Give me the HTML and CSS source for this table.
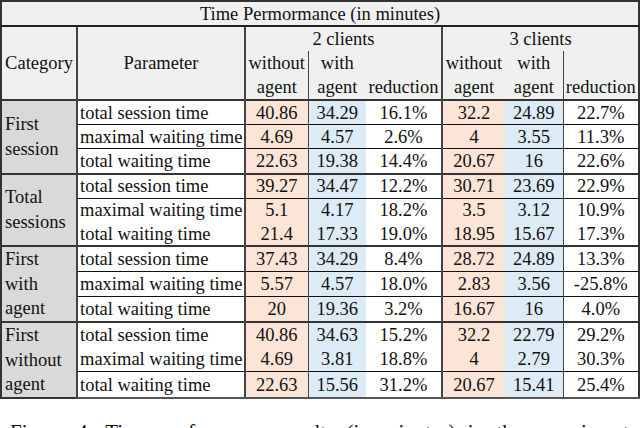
FILE: index.html
```html
<!DOCTYPE html>
<html>
<head>
<meta charset="utf-8">
<link rel="stylesheet" href="styles.css">
</head>
<body>
<table class="perf">
  <colgroup>
    <col class="c-cat"><col class="c-par">
    <col class="c-wo"><col class="c-w"><col class="c-red">
    <col class="c-wo"><col class="c-w"><col class="c-red">
  </colgroup>
  <tr class="title"><th colspan="8">Time Permormance (in minutes)</th></tr>
  <tr class="hd-a">
    <th rowspan="2" class="h-cat">Category</th>
    <th rowspan="2" class="h-par">Parameter</th>
    <th colspan="3" class="grp g1">2 clients</th>
    <th colspan="3" class="grp">3 clients</th>
  </tr>
  <tr class="hd-b">
    <th class="sub">without<br>agent</th>
    <th class="sub vl">with<br>agent</th>
    <th class="sub bot g1">reduction</th>
    <th class="sub">without<br>agent</th>
    <th class="sub">with<br>agent</th>
    <th class="sub bot vl">reduction</th>
  </tr>

  <tr class="sec">
    <td rowspan="3" class="cat">First<br>session</td>
    <td class="par">total session time</td>
    <td class="o">40.86</td><td class="b vl">34.29</td><td class="g1">16.1%</td>
    <td class="o">32.2</td><td class="b">24.89</td><td class="vl">22.7%</td>
  </tr>
  <tr class="rl">
    <td class="par">maximal waiting time</td>
    <td class="o">4.69</td><td class="b vl">4.57</td><td class="g1">2.6%</td>
    <td class="o">4</td><td class="b">3.55</td><td class="vl">11.3%</td>
  </tr>
  <tr class="rl">
    <td class="par">total waiting time</td>
    <td class="o">22.63</td><td class="b vl">19.38</td><td class="g1">14.4%</td>
    <td class="o">20.67</td><td class="b">16</td><td class="vl">22.6%</td>
  </tr>

  <tr class="sec">
    <td rowspan="3" class="cat">Total<br>sessions</td>
    <td class="par">total session time</td>
    <td class="o">39.27</td><td class="b vl">34.47</td><td class="g1">12.2%</td>
    <td class="o">30.71</td><td class="b">23.69</td><td class="vl">22.9%</td>
  </tr>
  <tr class="rl">
    <td class="par">maximal waiting time</td>
    <td class="o">5.1</td><td class="b vl">4.17</td><td class="g1">18.2%</td>
    <td class="o">3.5</td><td class="b">3.12</td><td class="vl">10.9%</td>
  </tr>
  <tr>
    <td class="par">total waiting time</td>
    <td class="o">21.4</td><td class="b vl">17.33</td><td class="g1">19.0%</td>
    <td class="o">18.95</td><td class="b">15.67</td><td class="vl">17.3%</td>
  </tr>

  <tr class="sec">
    <td rowspan="3" class="cat">First<br>with<br>agent</td>
    <td class="par">total session time</td>
    <td class="o">37.43</td><td class="b vl">34.29</td><td class="g1">8.4%</td>
    <td class="o">28.72</td><td class="b">24.89</td><td class="vl">13.3%</td>
  </tr>
  <tr class="rl">
    <td class="par">maximal waiting time</td>
    <td class="o">5.57</td><td class="b vl">4.57</td><td class="g1">18.0%</td>
    <td class="o">2.83</td><td class="b">3.56</td><td class="vl">-25.8%</td>
  </tr>
  <tr class="rl">
    <td class="par">total waiting time</td>
    <td class="o">20</td><td class="b vl">19.36</td><td class="g1">3.2%</td>
    <td class="o">16.67</td><td class="b">16</td><td class="vl">4.0%</td>
  </tr>

  <tr class="sec">
    <td rowspan="3" class="cat">First<br>without<br>agent</td>
    <td class="par">total session time</td>
    <td class="o">40.86</td><td class="b vl">34.63</td><td class="g1">15.2%</td>
    <td class="o">32.2</td><td class="b">22.79</td><td class="vl">29.2%</td>
  </tr>
  <tr>
    <td class="par">maximal waiting time</td>
    <td class="o">4.69</td><td class="b vl">3.81</td><td class="g1">18.8%</td>
    <td class="o">4</td><td class="b">2.79</td><td class="vl">30.3%</td>
  </tr>
  <tr class="rl last">
    <td class="par">total waiting time</td>
    <td class="o">22.63</td><td class="b vl">15.56</td><td class="g1">31.2%</td>
    <td class="o">20.67</td><td class="b">15.41</td><td class="vl">25.4%</td>
  </tr>
</table>
<p class="caption">Figure 4: Time performance results (in minutes) in the experiments</p>
</body>
</html>
```

FILE: styles.css
```css
html, body {
  margin: 0;
  padding: 0;
  overflow: hidden;
  background: #ffffff;
}

body {
  font-family: "Liberation Serif", "DejaVu Serif", serif;
}

.perf {
  border-collapse: collapse;
  table-layout: fixed;
  width: 639px;
  font-family: "Liberation Serif", "DejaVu Serif", serif;
  font-size: 18.5px;
  color: #111;
  border: 2px solid #333;
}

.c-cat { width: 76px; }
.c-par { width: 168px; }
.c-wo { width: 63px; }
.c-w { width: 58px; }
.c-red { width: 76px; }

.perf th,
.perf td {
  padding: 0 1px;
  font-family: "Liberation Serif", "DejaVu Serif", serif;
  font-weight: normal;
  white-space: nowrap;
  text-align: center;
  vertical-align: middle;
  line-height: 22px;
}

.perf .title th {
  height: 23px;
  background: #f0f0f0;
  border-bottom: 2px solid #222;
}

.perf .hd-a th,
.perf .hd-b th {
  background: #f0f0f0;
}

.perf .hd-a th { height: 24px; }
.perf .hd-b th { height: 46px; vertical-align: top; line-height: 24px; }
.perf .hd-b th.bot { vertical-align: bottom; }

.perf .h-cat { border-right: 2px solid #444; }
.perf .h-par { border-right: 2px solid #444; }

.perf .g1 { border-right: 2px solid #444; }

.perf .vl { border-left: 1px solid #444; }

.perf td { height: 23.2px; }

.perf .cat {
  background: #d9d9d9;
  text-align: left;
  padding-left: 3px;
  border-right: 2px solid #444;
  border-top: 2px solid #333;
  line-height: 24.6px;
}

.perf .par {
  text-align: left;
  padding-left: 2px;
  border-right: 2px solid #444;
}

.perf .o { background: #fce4d6; }
.perf .b { background: #ddebf7; }

.perf .sec td { border-top: 2px solid #333; }
.perf .rl td { border-top: 1px solid #111; }
.perf .last td { border-bottom: 2px solid #555; }

.caption {
  margin: 21px 0 0 10px;
  font-family: "Liberation Serif", "DejaVu Serif", serif;
  font-size: 21px;
  line-height: 24px;
  color: #111;
  word-spacing: 7px;
  white-space: nowrap;
}
```
